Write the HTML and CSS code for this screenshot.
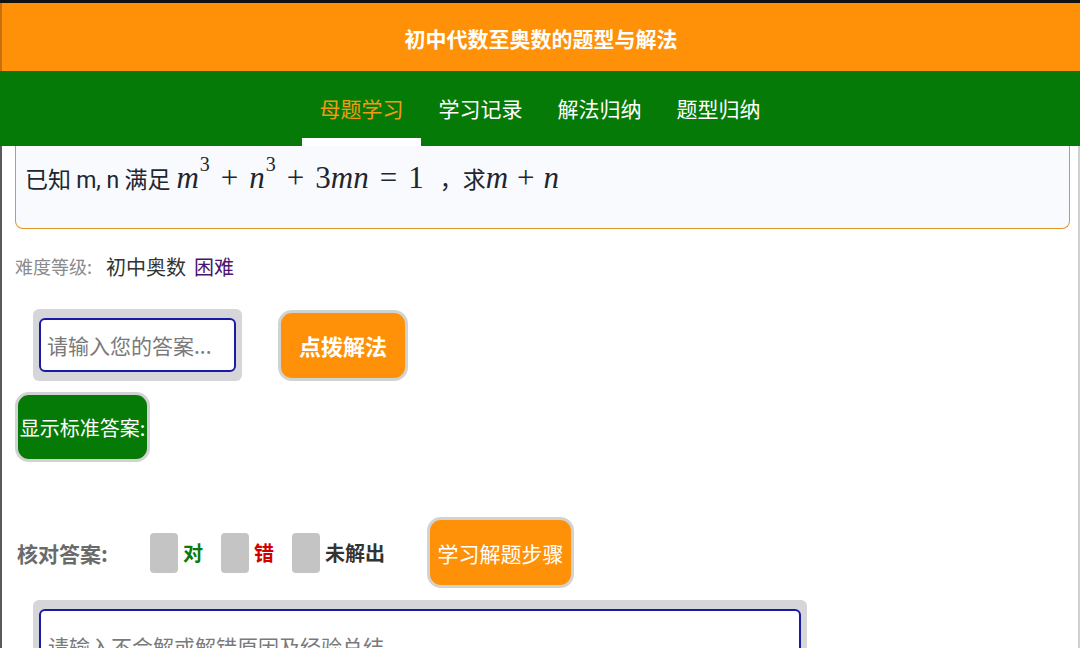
FILE: index.html
```html
<!DOCTYPE html>
<html lang="zh">
<head>
<meta charset="utf-8">
<title>初中代数至奥数的题型与解法</title>
<link rel="stylesheet" href="styles.css">
</head>
<body>
<div class="topline"></div>
<header class="title">初中代数至奥数的题型与解法</header>
<nav class="tabs">
  <div class="tab active">母题学习</div>
  <div class="tab">学习记录</div>
  <div class="tab">解法归纳</div>
  <div class="tab">题型归纳</div>
</nav>
<main class="page">
  <section class="card">
    <span class="q">已知 <span class="lat">m, n</span> 满足</span>
    <span class="math"><i>m</i><sup>3</sup><span class="op">+</span><i>n</i><sup>3</sup><span class="op">+</span>3<i>m</i><i>n</i><span class="op">=</span>1</span>
    <span class="q comma">，求</span><span class="math tail"><i>m</i><span class="op">+</span><i>n</i></span>
  </section>

  <div class="level">
    <span class="level-label">难度等级:</span>
    <span class="level-val">初中奥数</span>
    <span class="level-hard">困难</span>
  </div>

  <div class="row row1">
    <div class="input-wrap"><div class="input">请输入您的答案...</div></div>
    <div class="btn btn-orange btn-bold">点拨解法</div>
  </div>

  <div class="row row2">
    <div class="btn btn-green">显示标准答案:</div>
  </div>

  <div class="row row3">
    <span class="check-label">核对答案:</span>
    <span class="box"></span><span class="opt ok">对</span>
    <span class="box"></span><span class="opt bad">错</span>
    <span class="box"></span><span class="opt none">未解出</span>
    <div class="btn btn-orange btn-steps">学习解题步骤</div>
  </div>

  <div class="area-wrap"><div class="area">请输入不会解或解错原因及经验总结</div></div>
</main>
</body>
</html>
```
FILE: styles.css
```css
* { box-sizing: border-box; }
html, body { margin: 0; padding: 0; }
body {
  width: 1080px;
  height: 648px;
  overflow: hidden;
  background: #ffffff;
  font-family: "Noto Sans CJK SC", "Noto Sans", sans-serif;
}
.topline { height: 3px; background: #111; }
.title {
  height: 68px;
  background: #ff9108;
  color: #ffffff;
  font-weight: bold;
  font-size: 21px;
  display: flex;
  align-items: center;
  justify-content: center;
  border-left: 2px solid #c87010;
  padding-top: 2px;
}
.tabs {
  height: 75px;
  background: #067a06;
  display: flex;
  justify-content: center;
  position: relative;
  z-index: 2;
}
.tab {
  width: 119px;
  display: flex;
  align-items: center;
  justify-content: center;
  color: #ffffff;
  font-size: 21px;
  padding-top: 6px;
  border-bottom: 8px solid transparent;
}
.tab.active { color: #f29a12; border-bottom-color: #ffffff; }

.page {
  height: 502px;
  border-left: 2px solid #5a5a5a;
  border-right: 2px solid #d0d0d0;
  padding: 0 8px 0 11px;
}
.card {
  margin-left: 2px;
  height: 83px;
  border: 1.5px solid #e0962a;
  border-top: none;
  border-radius: 0 0 8px 8px;
  background: #f8fafe;
  padding: 14px 0 0 9px;
  display: flex;
  align-items: baseline;
  color: #1f2630;
}
.q { font-size: 23px; }
.lat { font-family: Roboto, "Noto Sans", sans-serif; font-size: 23px; }
.comma { margin-left: 16px; }
.math {
  font-family: "Liberation Serif", "DejaVu Serif", serif;
  font-size: 31px;
  margin-left: 6px;
  color: #1f2630;
}
.math sup { font-size: 20px; vertical-align: 17px; line-height: 0; margin-left: 1px; }
.op { margin: 0 11px; }
.math.tail { margin-left: 0; }
.tail .op { margin: 0 9px; }

.level {
  margin-top: 22px;
  height: 30px;
  display: flex;
  align-items: center;
  margin-left: 2px;
}
.level-label { color: #8a8a8a; font-size: 18px; }
.level-val { color: #333333; font-size: 20px; margin-left: 14px; }
.level-hard { color: #4b136e; font-size: 20px; margin-left: 8px; }

.row { display: flex; align-items: center; }
.row1 { margin-top: 28px; }
.input-wrap {
  margin-left: 20px;
  width: 209px;
  height: 72px;
  background: #d6d6da;
  border-radius: 6px;
  padding: 9px 6px;
}
.input {
  height: 54px;
  border: 2px solid #1a1aa3;
  border-radius: 6px;
  background: #ffffff;
  color: #7a7a7a;
  font-size: 21px;
  display: flex;
  align-items: center;
  padding-left: 6px;
}
.btn {
  border: 3px solid #d2d2d2;
  border-radius: 14px;
  color: #ffffff;
  display: flex;
  align-items: center;
  justify-content: center;
}
.btn-orange { background: #ff9108; }
.row1 .btn { margin-left: 36px; width: 130px; height: 71px; font-size: 22px; }
.btn-bold { font-weight: bold; }
.row2 { margin-top: 11px; }
.btn-green {
  background: #067a06;
  width: 135px;
  height: 70px;
  font-size: 20px;
  margin-left: 2px;
  white-space: nowrap;
}
.row3 { margin-top: 55px; height: 71px; }
.check-label {
  color: #6a6a6a;
  font-size: 21px;
  font-weight: bold;
  margin-left: 4px;
  width: 133px;
}
.box {
  width: 28px;
  height: 40px;
  background: #c4c4c4;
  border-radius: 4px;
}
.opt { font-size: 20px; font-weight: bold; margin-left: 5px; margin-right: 18px; }
.ok { color: #0b7a0b; }
.bad { color: #d40000; }
.none { color: #333333; margin-right: 42px; }
.btn-steps { width: 147px; height: 71px; font-size: 21px; }

.area-wrap {
  margin-top: 12px;
  margin-left: 20px;
  width: 774px;
  height: 120px;
  background: #d6d6da;
  border-radius: 6px;
  padding: 9px 6px;
}
.area {
  height: 110px;
  border: 2px solid #1a1aa3;
  border-radius: 6px;
  background: #ffffff;
  color: #7a7a7a;
  font-size: 21px;
  padding: 20px 0 0 7px;
}
```
